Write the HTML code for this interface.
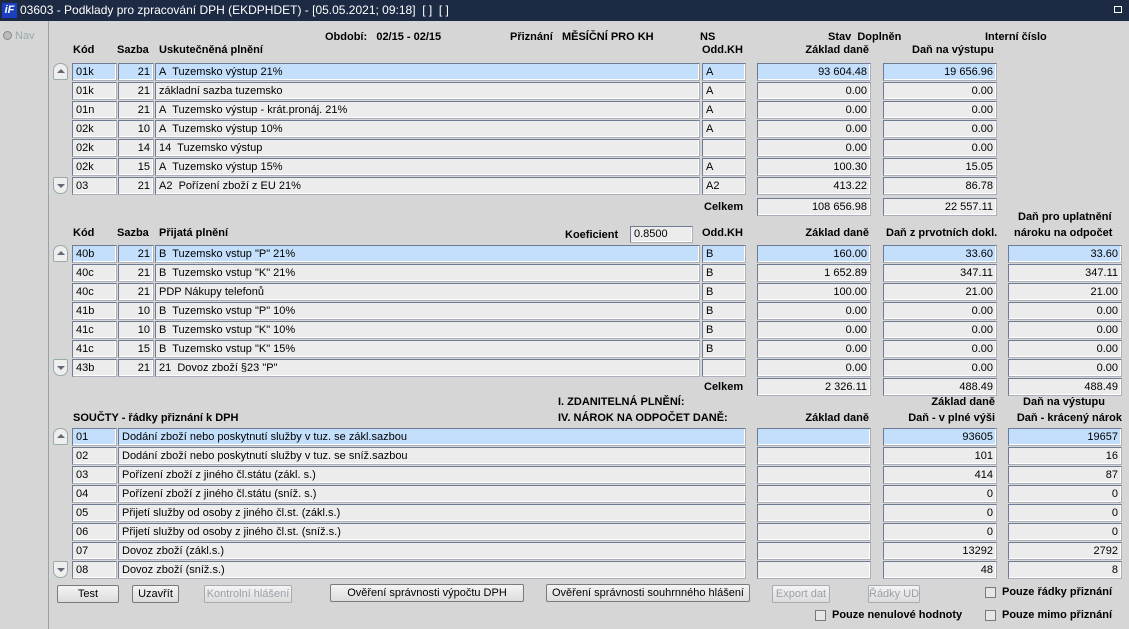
<!DOCTYPE html>
<html><head><meta charset="utf-8"><style>
*{margin:0;padding:0;box-sizing:border-box}
body{width:1129px;height:629px;background:#d6d6d6;font-family:"Liberation Sans",Arial,sans-serif;font-size:11px;color:#000;position:relative;overflow:hidden}
.a{position:absolute;white-space:nowrap}
.b{font-weight:bold}
.f{position:absolute;height:18px;background:#ececec;border:1px solid #aab0ba;border-top-color:#6e7b92;border-left-color:#6e7b92;line-height:16px;padding:0 3px;white-space:nowrap;overflow:hidden;box-shadow:inset -1px -1px 0 #fff}
.h{background:#c3dffb}
.r{text-align:right}
.btn{position:absolute;height:18px;border:1px solid #7a7a7a;border-radius:2px;background:linear-gradient(#f4f4f4,#dcdcdc);text-align:center;line-height:16px;font-size:11px;white-space:nowrap;overflow:hidden}
.dis{color:#9aa0a8;border-color:#a8acb2}
.cb{position:absolute;width:11px;height:11px;border:1px solid #7a7a7a;background:#e6e6e6}
.sc{position:absolute;left:53px;width:15px;height:17px;border:1px solid #9aa;border-radius:7px 7px 2px 2px;background:#eee}
.sc:after{content:"";position:absolute;left:3px;top:5px;border-left:4px solid transparent;border-right:4px solid transparent;border-bottom:4px solid #667}
.sd{border-radius:2px 2px 7px 7px}
.sd:after{border-bottom:0;border-top:4px solid #667;top:6px}
</style></head><body>
<div class="a" style="left:0;top:0;width:1129px;height:21px;background:#1d2a44;color:#fff;font-size:12px;line-height:21px;padding-left:20px">03603 - Podklady pro zpracování DPH (EKDPHDET) - [05.05.2021; 09:18]&nbsp; [ ]&nbsp; [ ]</div>
<div class="a" style="left:2px;top:3px;width:15px;height:15px;background:#1a3fc0;color:#fff;font-weight:bold;font-style:italic;font-size:11px;line-height:15px;text-align:center">iF</div>
<div class="a" style="left:1114px;top:6px;width:8px;height:7px;border:1px solid #fff"></div>
<div class="a" style="left:48px;top:21px;width:1px;height:608px;background:#9aa0a8"></div>
<div class="a" style="left:3px;top:31px;width:9px;height:9px;border-radius:5px;background:#bbb;border:1px solid #888"></div>
<div class="a" style="left:15px;top:30px;color:#9aa">Nav</div>

<div class="a b" style="left:325px;top:31px">Období:&nbsp;&nbsp; 02/15 - 02/15</div>
<div class="a b" style="left:510px;top:31px">Přiznání&nbsp;&nbsp; MĚSÍČNÍ PRO KH</div>
<div class="a b" style="left:700px;top:31px">NS</div>
<div class="a b" style="left:828px;top:31px">Stav&nbsp; Doplněn</div>
<div class="a b" style="left:985px;top:31px">Interní číslo</div>

<div class="a b" style="left:73px;top:44px">Kód</div>
<div class="a b" style="left:117px;top:44px">Sazba</div>
<div class="a b" style="left:159px;top:44px">Uskutečněná plnění</div>
<div class="a b" style="left:702px;top:44px">Odd.KH</div>
<div class="a b" style="left:757px;top:44px;width:112px;text-align:right">Základ daně</div>
<div class="a b" style="left:912px;top:44px">Daň na výstupu</div>

<div class="sc" style="top:63px"></div><div class="sc sd" style="top:177px"></div>
<div class="f h" style="left:72px;top:63px;width:45px">01k</div><div class="f h r" style="left:118px;top:63px;width:36px">21</div><div class="f h" style="left:155px;top:63px;width:545px">A&nbsp; Tuzemsko výstup 21%</div><div class="f h" style="left:702px;top:63px;width:44px">A</div><div class="f h r" style="left:757px;top:63px;width:114px">93 604.48</div><div class="f h r" style="left:883px;top:63px;width:114px">19 656.96</div>
<div class="f" style="left:72px;top:82px;width:45px">01k</div><div class="f r" style="left:118px;top:82px;width:36px">21</div><div class="f" style="left:155px;top:82px;width:545px">základní sazba tuzemsko</div><div class="f" style="left:702px;top:82px;width:44px">A</div><div class="f r" style="left:757px;top:82px;width:114px">0.00</div><div class="f r" style="left:883px;top:82px;width:114px">0.00</div>
<div class="f" style="left:72px;top:101px;width:45px">01n</div><div class="f r" style="left:118px;top:101px;width:36px">21</div><div class="f" style="left:155px;top:101px;width:545px">A&nbsp; Tuzemsko výstup - krát.pronáj. 21%</div><div class="f" style="left:702px;top:101px;width:44px">A</div><div class="f r" style="left:757px;top:101px;width:114px">0.00</div><div class="f r" style="left:883px;top:101px;width:114px">0.00</div>
<div class="f" style="left:72px;top:120px;width:45px">02k</div><div class="f r" style="left:118px;top:120px;width:36px">10</div><div class="f" style="left:155px;top:120px;width:545px">A&nbsp; Tuzemsko výstup 10%</div><div class="f" style="left:702px;top:120px;width:44px">A</div><div class="f r" style="left:757px;top:120px;width:114px">0.00</div><div class="f r" style="left:883px;top:120px;width:114px">0.00</div>
<div class="f" style="left:72px;top:139px;width:45px">02k</div><div class="f r" style="left:118px;top:139px;width:36px">14</div><div class="f" style="left:155px;top:139px;width:545px">14&nbsp; Tuzemsko výstup</div><div class="f" style="left:702px;top:139px;width:44px"></div><div class="f r" style="left:757px;top:139px;width:114px">0.00</div><div class="f r" style="left:883px;top:139px;width:114px">0.00</div>
<div class="f" style="left:72px;top:158px;width:45px">02k</div><div class="f r" style="left:118px;top:158px;width:36px">15</div><div class="f" style="left:155px;top:158px;width:545px">A&nbsp; Tuzemsko výstup 15%</div><div class="f" style="left:702px;top:158px;width:44px">A</div><div class="f r" style="left:757px;top:158px;width:114px">100.30</div><div class="f r" style="left:883px;top:158px;width:114px">15.05</div>
<div class="f" style="left:72px;top:177px;width:45px">03</div><div class="f r" style="left:118px;top:177px;width:36px">21</div><div class="f" style="left:155px;top:177px;width:545px">A2&nbsp; Pořízení zboží z EU 21%</div><div class="f" style="left:702px;top:177px;width:44px">A2</div><div class="f r" style="left:757px;top:177px;width:114px">413.22</div><div class="f r" style="left:883px;top:177px;width:114px">86.78</div>
<div class="a b" style="left:704px;top:201px">Celkem</div>
<div class="f r" style="left:757px;top:198px;width:114px">108 656.98</div><div class="f r" style="left:883px;top:198px;width:114px">22 557.11</div>

<div class="a b" style="left:1018px;top:211px">Daň pro uplatnění</div>
<div class="a b" style="left:73px;top:227px">Kód</div>
<div class="a b" style="left:117px;top:227px">Sazba</div>
<div class="a b" style="left:159px;top:227px">Přijatá plnění</div>
<div class="a b" style="left:565px;top:229px">Koeficient</div>
<div class="f" style="left:630px;top:226px;width:63px;height:17px;line-height:15px">0.8500</div>
<div class="a b" style="left:702px;top:227px">Odd.KH</div>
<div class="a b" style="left:757px;top:227px;width:112px;text-align:right">Základ daně</div>
<div class="a b" style="left:886px;top:227px">Daň z prvotních dokl.</div>
<div class="a b" style="left:1014px;top:227px">nároku na odpočet</div>
<div class="sc" style="top:245px"></div><div class="sc sd" style="top:359px"></div>
<div class="f h" style="left:72px;top:245px;width:45px">40b</div><div class="f h r" style="left:118px;top:245px;width:36px">21</div><div class="f h" style="left:155px;top:245px;width:545px">B&nbsp; Tuzemsko vstup "P" 21%</div><div class="f h" style="left:702px;top:245px;width:44px">B</div><div class="f h r" style="left:757px;top:245px;width:114px">160.00</div><div class="f h r" style="left:883px;top:245px;width:114px">33.60</div><div class="f h r" style="left:1008px;top:245px;width:114px">33.60</div>
<div class="f" style="left:72px;top:264px;width:45px">40c</div><div class="f r" style="left:118px;top:264px;width:36px">21</div><div class="f" style="left:155px;top:264px;width:545px">B&nbsp; Tuzemsko vstup "K" 21%</div><div class="f" style="left:702px;top:264px;width:44px">B</div><div class="f r" style="left:757px;top:264px;width:114px">1 652.89</div><div class="f r" style="left:883px;top:264px;width:114px">347.11</div><div class="f r" style="left:1008px;top:264px;width:114px">347.11</div>
<div class="f" style="left:72px;top:283px;width:45px">40c</div><div class="f r" style="left:118px;top:283px;width:36px">21</div><div class="f" style="left:155px;top:283px;width:545px">PDP Nákupy telefonů</div><div class="f" style="left:702px;top:283px;width:44px">B</div><div class="f r" style="left:757px;top:283px;width:114px">100.00</div><div class="f r" style="left:883px;top:283px;width:114px">21.00</div><div class="f r" style="left:1008px;top:283px;width:114px">21.00</div>
<div class="f" style="left:72px;top:302px;width:45px">41b</div><div class="f r" style="left:118px;top:302px;width:36px">10</div><div class="f" style="left:155px;top:302px;width:545px">B&nbsp; Tuzemsko vstup "P" 10%</div><div class="f" style="left:702px;top:302px;width:44px">B</div><div class="f r" style="left:757px;top:302px;width:114px">0.00</div><div class="f r" style="left:883px;top:302px;width:114px">0.00</div><div class="f r" style="left:1008px;top:302px;width:114px">0.00</div>
<div class="f" style="left:72px;top:321px;width:45px">41c</div><div class="f r" style="left:118px;top:321px;width:36px">10</div><div class="f" style="left:155px;top:321px;width:545px">B&nbsp; Tuzemsko vstup "K" 10%</div><div class="f" style="left:702px;top:321px;width:44px">B</div><div class="f r" style="left:757px;top:321px;width:114px">0.00</div><div class="f r" style="left:883px;top:321px;width:114px">0.00</div><div class="f r" style="left:1008px;top:321px;width:114px">0.00</div>
<div class="f" style="left:72px;top:340px;width:45px">41c</div><div class="f r" style="left:118px;top:340px;width:36px">15</div><div class="f" style="left:155px;top:340px;width:545px">B&nbsp; Tuzemsko vstup "K" 15%</div><div class="f" style="left:702px;top:340px;width:44px">B</div><div class="f r" style="left:757px;top:340px;width:114px">0.00</div><div class="f r" style="left:883px;top:340px;width:114px">0.00</div><div class="f r" style="left:1008px;top:340px;width:114px">0.00</div>
<div class="f" style="left:72px;top:359px;width:45px">43b</div><div class="f r" style="left:118px;top:359px;width:36px">21</div><div class="f" style="left:155px;top:359px;width:545px">21&nbsp; Dovoz zboží §23 "P"</div><div class="f" style="left:702px;top:359px;width:44px"></div><div class="f r" style="left:757px;top:359px;width:114px">0.00</div><div class="f r" style="left:883px;top:359px;width:114px">0.00</div><div class="f r" style="left:1008px;top:359px;width:114px">0.00</div>
<div class="a b" style="left:704px;top:381px">Celkem</div>
<div class="f r" style="left:757px;top:378px;width:114px">2 326.11</div><div class="f r" style="left:883px;top:378px;width:114px">488.49</div><div class="f r" style="left:1008px;top:378px;width:114px">488.49</div>

<div class="a b" style="left:558px;top:396px">I. ZDANITELNÁ PLNĚNÍ:</div>
<div class="a b" style="left:883px;top:396px;width:112px;text-align:right">Základ daně</div>
<div class="a b" style="left:1008px;top:396px;width:112px;text-align:center">Daň na výstupu</div>
<div class="a b" style="left:73px;top:412px">SOUČTY - řádky přiznání k DPH</div>
<div class="a b" style="left:558px;top:412px">IV. NÁROK NA ODPOČET DANĚ:</div>
<div class="a b" style="left:757px;top:412px;width:112px;text-align:right">Základ daně</div>
<div class="a b" style="left:883px;top:412px;width:112px;text-align:right">Daň - v plné výši</div>
<div class="a b" style="left:1008px;top:412px;width:114px;text-align:right">Daň - krácený nárok</div>
<div class="sc" style="top:428px"></div><div class="sc sd" style="top:561px"></div>
<div class="f h" style="left:72px;top:428px;width:45px">01</div><div class="f h" style="left:118px;top:428px;width:628px">Dodání zboží nebo poskytnutí služby v tuz. se zákl.sazbou</div><div class="f h" style="left:757px;top:428px;width:114px"></div><div class="f h r" style="left:883px;top:428px;width:114px">93605</div><div class="f h r" style="left:1008px;top:428px;width:114px">19657</div>
<div class="f" style="left:72px;top:447px;width:45px">02</div><div class="f" style="left:118px;top:447px;width:628px">Dodání zboží nebo poskytnutí služby v tuz. se sníž.sazbou</div><div class="f" style="left:757px;top:447px;width:114px"></div><div class="f r" style="left:883px;top:447px;width:114px">101</div><div class="f r" style="left:1008px;top:447px;width:114px">16</div>
<div class="f" style="left:72px;top:466px;width:45px">03</div><div class="f" style="left:118px;top:466px;width:628px">Pořízení zboží z jiného čl.státu (zákl. s.)</div><div class="f" style="left:757px;top:466px;width:114px"></div><div class="f r" style="left:883px;top:466px;width:114px">414</div><div class="f r" style="left:1008px;top:466px;width:114px">87</div>
<div class="f" style="left:72px;top:485px;width:45px">04</div><div class="f" style="left:118px;top:485px;width:628px">Pořízení zboží z jiného čl.státu (sníž. s.)</div><div class="f" style="left:757px;top:485px;width:114px"></div><div class="f r" style="left:883px;top:485px;width:114px">0</div><div class="f r" style="left:1008px;top:485px;width:114px">0</div>
<div class="f" style="left:72px;top:504px;width:45px">05</div><div class="f" style="left:118px;top:504px;width:628px">Přijetí služby od osoby z jiného čl.st. (zákl.s.)</div><div class="f" style="left:757px;top:504px;width:114px"></div><div class="f r" style="left:883px;top:504px;width:114px">0</div><div class="f r" style="left:1008px;top:504px;width:114px">0</div>
<div class="f" style="left:72px;top:523px;width:45px">06</div><div class="f" style="left:118px;top:523px;width:628px">Přijetí služby od osoby z jiného čl.st. (sníž.s.)</div><div class="f" style="left:757px;top:523px;width:114px"></div><div class="f r" style="left:883px;top:523px;width:114px">0</div><div class="f r" style="left:1008px;top:523px;width:114px">0</div>
<div class="f" style="left:72px;top:542px;width:45px">07</div><div class="f" style="left:118px;top:542px;width:628px">Dovoz zboží (zákl.s.)</div><div class="f" style="left:757px;top:542px;width:114px"></div><div class="f r" style="left:883px;top:542px;width:114px">13292</div><div class="f r" style="left:1008px;top:542px;width:114px">2792</div>
<div class="f" style="left:72px;top:561px;width:45px">08</div><div class="f" style="left:118px;top:561px;width:628px">Dovoz zboží (sníž.s.)</div><div class="f" style="left:757px;top:561px;width:114px"></div><div class="f r" style="left:883px;top:561px;width:114px">48</div><div class="f r" style="left:1008px;top:561px;width:114px">8</div>

<div class="btn" style="left:57px;top:585px;width:62px">Test</div>
<div class="btn" style="left:132px;top:585px;width:47px">Uzavřít</div>
<div class="btn dis" style="left:204px;top:585px;width:88px">Kontrolní hlášení</div>
<div class="btn" style="left:330px;top:584px;width:194px">Ověření správnosti výpočtu DPH</div>
<div class="btn" style="left:546px;top:584px;width:204px">Ověření správnosti souhrnného hlášení</div>
<div class="btn dis" style="left:772px;top:585px;width:58px">Export dat</div>
<div class="btn dis" style="left:868px;top:585px;width:52px">Řádky UDD</div>
<div class="cb" style="left:985px;top:587px"></div><div class="a b" style="left:1002px;top:586px">Pouze řádky přiznání</div>
<div class="cb" style="left:815px;top:610px"></div><div class="a b" style="left:832px;top:609px">Pouze nenulové hodnoty</div>
<div class="cb" style="left:985px;top:610px"></div><div class="a b" style="left:1002px;top:609px">Pouze mimo přiznání</div>
</body></html>
